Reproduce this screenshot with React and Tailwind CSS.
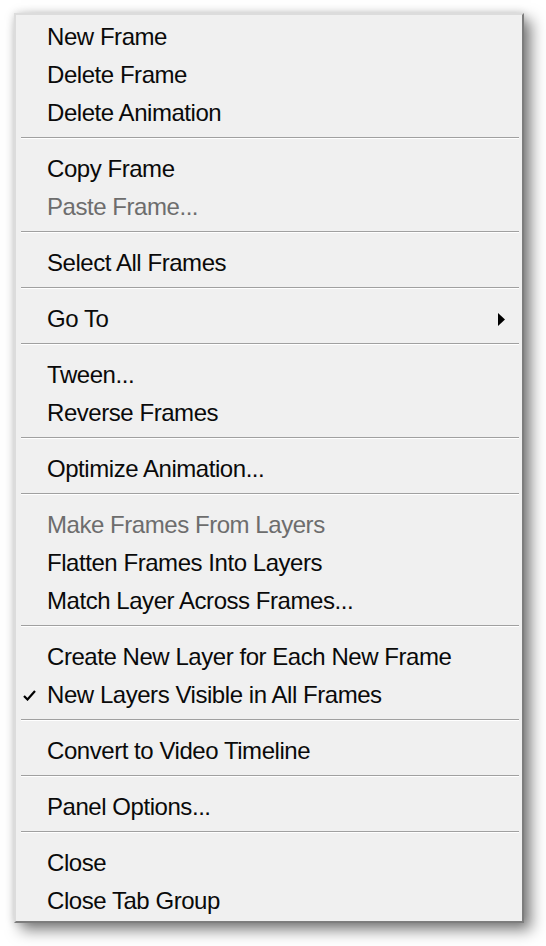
const groups = [
  [{ label: 'New Frame' }, { label: 'Delete Frame' }, { label: 'Delete Animation' }],
  [{ label: 'Copy Frame' }, { label: 'Paste Frame...', disabled: true }],
  [{ label: 'Select All Frames' }],
  [{ label: 'Go To', submenu: true }],
  [{ label: 'Tween...' }, { label: 'Reverse Frames' }],
  [{ label: 'Optimize Animation...' }],
  [
    { label: 'Make Frames From Layers', disabled: true },
    { label: 'Flatten Frames Into Layers' },
    { label: 'Match Layer Across Frames...' },
  ],
  [{ label: 'Create New Layer for Each New Frame' }, { label: 'New Layers Visible in All Frames', checked: true }],
  [{ label: 'Convert to Video Timeline' }],
  [{ label: 'Panel Options...' }],
  [{ label: 'Close' }, { label: 'Close Tab Group' }],
];

function MenuItem({ item }) {
  return (
    <div
      className={`flex h-[38px] items-center ${item.disabled ? 'text-[#6d6d6d]' : 'text-[#0a0a0a]'}`}
    >
      <div className="flex w-[31px] shrink-0 items-center pl-[7px] pt-[2px]">
        {item.checked ? (
          <svg width="13" height="11" viewBox="0 0 13 11">
            <path d="M1 6 L4.5 9.5 L12 1" fill="none" stroke="#000" strokeWidth="2.2" />
          </svg>
        ) : null}
      </div>
      <span className="whitespace-nowrap pt-[2px] tracking-[-0.45px]">{item.label}</span>
      {item.submenu ? (
        <svg className="ml-auto mr-[17px] mt-[3px]" width="7" height="13" viewBox="0 0 7 13">
          <path d="M0 0 L7 6.5 L0 13 Z" fill="#000" />
        </svg>
      ) : null}
    </div>
  );
}

function Separator() {
  return (
    <div className="h-[18px] pl-[5px] pr-[3px] pt-[6px]">
      <div className="h-px bg-[#a0a0a0]" />
      <div className="h-px bg-white" />
    </div>
  );
}

export default function App() {
  return (
    <div className="min-h-[946px] bg-white pl-[14px] pt-[13px]">
      <div
        className="w-[510px] border-2 border-t-[#dcdcdc] border-l-[#dcdcdc] border-r-[#7d7d7d] border-b-[#7d7d7d] bg-[#f0f0f0] py-[2px] text-[24px] shadow-[7px_7px_14px_rgba(0,0,0,0.5),0_0_8px_rgba(0,0,0,0.14)]"
        style={{ fontFamily: '"Liberation Sans", Arial, sans-serif' }}
      >
        {groups.map((group, i) => (
          <div key={i}>
            {i > 0 ? <Separator /> : null}
            {group.map((item) => (
              <MenuItem key={item.label} item={item} />
            ))}
          </div>
        ))}
      </div>
    </div>
  );
}
